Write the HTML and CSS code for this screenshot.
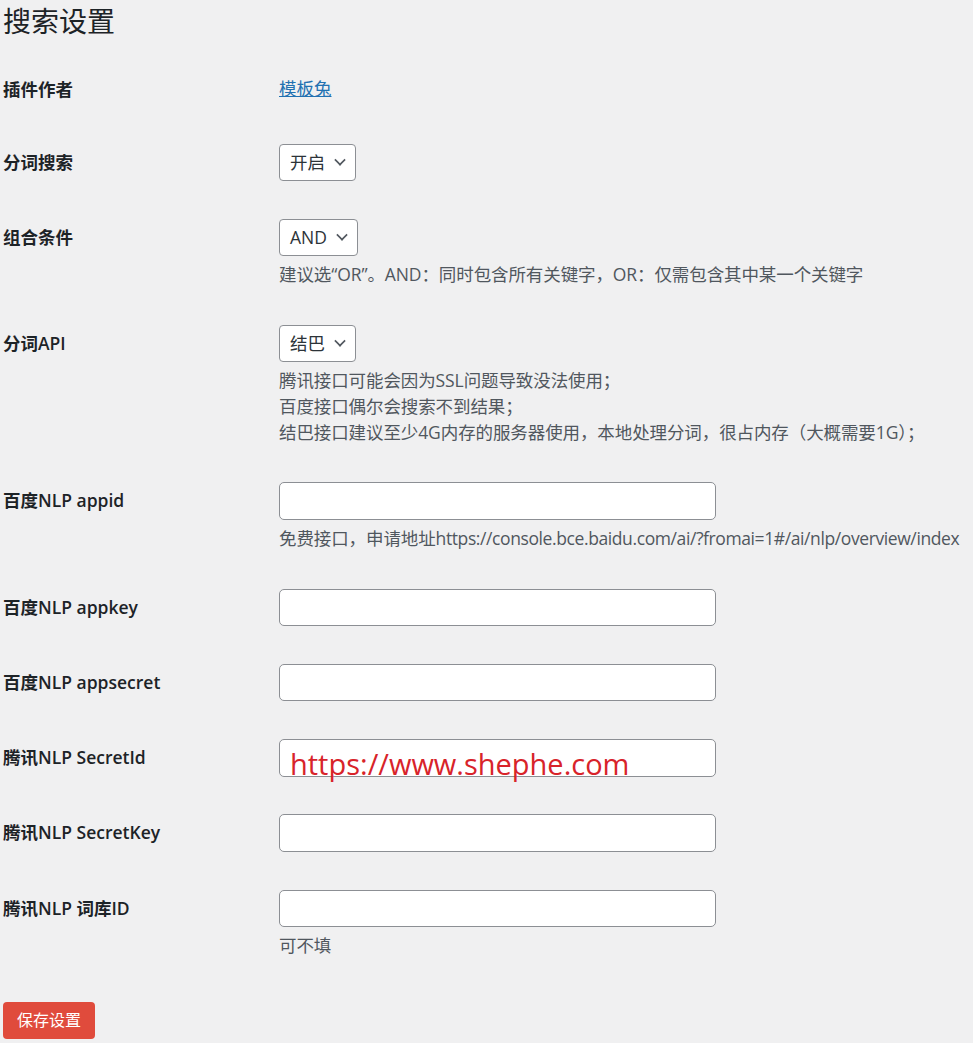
FILE: index.html
```html
<!DOCTYPE html>
<html lang="zh-CN">
<head>
    <meta charset="UTF-8">
    <meta name="viewport" content="width=device-width, initial-scale=1.0">
    <title>搜索设置</title>
    <link rel="stylesheet" href="styles.css">
</head>
<body>
    <div class="wrap">
        <h1 class="page-title">搜索设置</h1>

        <form class="settings-form">
            <div class="form-row">
                <div class="row-label">插件作者</div>
                <div class="row-field"><a class="author-link" href="#">模板兔</a></div>
            </div>

            <div class="form-row">
                <div class="row-label">分词搜索</div>
                <div class="row-field">
                    <div class="select-box">开启<span class="chevron"></span></div>
                </div>
            </div>

            <div class="form-row">
                <div class="row-label">组合条件</div>
                <div class="row-field">
                    <div class="select-box">AND<span class="chevron"></span></div>
                    <p class="description">建议选“OR”。AND：同时包含所有关键字，OR：仅需包含其中某一个关键字</p>
                </div>
            </div>

            <div class="form-row">
                <div class="row-label">分词API</div>
                <div class="row-field">
                    <div class="select-box">结巴<span class="chevron"></span></div>
                    <p class="description">腾讯接口可能会因为SSL问题导致没法使用；<br>百度接口偶尔会搜索不到结果；<br>结巴接口建议至少4G内存的服务器使用，本地处理分词，很占内存（大概需要1G）；</p>
                </div>
            </div>

            <div class="form-row">
                <div class="row-label">百度NLP appid</div>
                <div class="row-field">
                    <div class="text-input"></div>
                    <p class="description">免费接口，申请地址<span class="url">https://console.bce.baidu.com/ai/?fromai=1#/ai/nlp/overview/index</span></p>
                </div>
            </div>

            <div class="form-row">
                <div class="row-label">百度NLP appkey</div>
                <div class="row-field"><div class="text-input"></div></div>
            </div>

            <div class="form-row">
                <div class="row-label">百度NLP appsecret</div>
                <div class="row-field"><div class="text-input"></div></div>
            </div>

            <div class="form-row">
                <div class="row-label">腾讯NLP SecretId</div>
                <div class="row-field">
                    <div class="text-input"></div>
                    <span class="watermark">https://www.shephe.com</span>
                </div>
            </div>

            <div class="form-row">
                <div class="row-label">腾讯NLP SecretKey</div>
                <div class="row-field"><div class="text-input"></div></div>
            </div>

            <div class="form-row">
                <div class="row-label">腾讯NLP 词库ID</div>
                <div class="row-field">
                    <div class="text-input"></div>
                    <p class="description">可不填</p>
                </div>
            </div>

            <p class="submit"><span class="save-btn">保存设置</span></p>
        </form>
    </div>
</body>
</html>
```

FILE: styles.css
```css
:root {
    --page-bg: #f0f0f1;
    --text: #1d2327;
    --muted: #50575e;
    --link: #2271b1;
    --border: #8c8f94;
    --save: #e04b3c;
}

body {
    margin: 0;
    background: var(--page-bg);
    color: var(--text);
    font-family: "Open Sans", "Noto Sans CJK SC", sans-serif;
    font-size: 17.5px;
    line-height: 1.3;
}

.wrap {
    padding: 0 0 0 3px;
}

.page-title {
    margin: 0;
    padding-top: 3px;
    height: 49px;
    font-size: 28px;
    font-weight: 400;
    line-height: 36px;
}

.form-row {
    display: flex;
}

.row-label {
    width: 263px;
    flex-shrink: 0;
    padding: 26px 0 24px;
    font-weight: 600;
    line-height: 23px;
}

.row-field {
    position: relative;
    padding: 19px 0 18.75px 13px;
}

.form-row:first-child .row-field {
    padding-top: 25px;
}

.author-link {
    color: var(--link);
    text-decoration: underline;
    line-height: 23px;
}

.select-box {
    display: inline-flex;
    align-items: center;
    box-sizing: border-box;
    height: 37px;
    padding: 0 10px 0 10px;
    background: #fff;
    border: 1px solid var(--border);
    border-radius: 4px;
    color: #2c3338;
}

.chevron {
    width: 8px;
    height: 8px;
    margin: -5px 0 0 10px;
    border-right: 2px solid #50575e;
    border-bottom: 2px solid #50575e;
    transform: rotate(45deg) scale(0.8);
}

.text-input {
    box-sizing: border-box;
    width: 437px;
    height: 37.5px;
    background: #fff;
    border: 1px solid var(--border);
    border-radius: 5px;
}

.description {
    margin: 5px 0 0;
    color: var(--muted);
    line-height: 26px;
    white-space: nowrap;
    letter-spacing: -0.1px;
}

.url {
    letter-spacing: -0.4px;
}

.watermark {
    position: absolute;
    left: 24px;
    top: 29px;
    color: #d8232a;
    font-size: 29px;
    line-height: 1;
    white-space: nowrap;
}

.submit {
    margin: 25px 0 0;
}

.save-btn {
    display: inline-block;
    height: 37px;
    padding: 0 14px;
    background: var(--save);
    border-radius: 4px;
    color: #fff;
    font-size: 16px;
    line-height: 37px;
}
```
